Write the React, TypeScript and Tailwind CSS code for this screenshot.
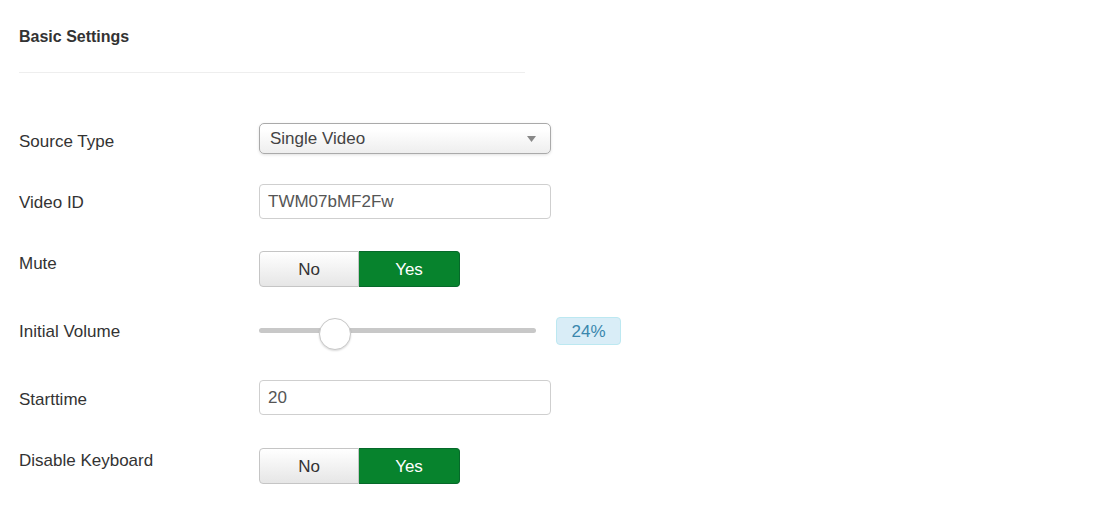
import React from 'react'

function Toggle({ value }: { value: boolean }) {
  return (
    <div className="flex h-[36px] w-[201px]">
      <div
        className={`flex w-[100px] items-center justify-center rounded-l-[4px] border border-[#c5c5c5] pt-[1px] ${
          value ? 'bg-gradient-to-b from-white to-[#e6e6e6] text-[#333]' : 'bg-[#07832d] text-white'
        }`}
      >
        No
      </div>
      <div
        className={`flex w-[101px] items-center justify-center rounded-r-[4px] border border-l-0 pt-[1px] ${
          value ? 'border-[#06692a] bg-[#07832d] text-white' : 'border-[#c5c5c5] bg-gradient-to-b from-white to-[#e6e6e6] text-[#333]'
        }`}
      >
        Yes
      </div>
    </div>
  )
}

function TextInput({ value }: { value: string }) {
  return (
    <div className="flex h-[35px] w-[292px] items-center rounded-[4px] border border-[#cfcfcf] bg-white px-[8px] pt-[1px] text-[#555]">
      {value}
    </div>
  )
}

export default function App() {
  const volume = 24
  return (
    <div className="min-h-[517px] bg-white px-[19px] pt-[27px] text-[17px] leading-[20px] text-[#333] font-['Liberation_Sans',Arial,sans-serif]">
      <h3 className="text-[16px] font-bold">Basic Settings</h3>
      <div className="mt-[25px] h-px w-[506px] bg-[#eeeeee]" />

      {/* Source Type */}
      <div className="mt-[50px] flex">
        <div className="w-[240px] pt-[9px]">Source Type</div>
        <div className="flex h-[31px] w-[292px] items-center justify-between rounded-[5px] border border-[#aaa] bg-gradient-to-b from-white from-20% to-[#eeeeee] pl-[10px] pr-[14px] pt-[1px] text-[#444] shadow-[0_1px_3px_rgba(0,0,0,0.12)]">
          <span>Single Video</span>
          <svg width="9" height="6" viewBox="0 0 9 6">
            <path d="M0 0 H9 L4.5 6 Z" fill="#888" />
          </svg>
        </div>
      </div>

      {/* Video ID */}
      <div className="mt-[30px] flex">
        <div className="w-[240px] pt-[9px]">Video ID</div>
        <TextInput value="TWM07bMF2Fw" />
      </div>

      {/* Mute */}
      <div className="mt-[32px] flex">
        <div className="w-[240px] pt-[3px]">Mute</div>
        <Toggle value={true} />
      </div>

      {/* Initial Volume */}
      <div className="mt-[30px] flex">
        <div className="w-[240px] pt-[5px]">Initial Volume</div>
        <div className="flex items-start gap-[20px]">
          <div className="relative h-[33px] w-[277px]">
            <div className="absolute left-0 right-0 top-[11px] h-[5px] rounded-full bg-[#c8c8c8]" />
            <div
              className="absolute top-[1px] h-[32px] w-[32px] -translate-x-1/2 rounded-full border border-[#c8c8c8] bg-white shadow-[0_1px_2px_rgba(0,0,0,0.15)]"
              style={{ left: `${(volume / 100) * 277 + 10}px` }}
            />
          </div>
          <div className="flex h-[28px] w-[65px] items-center justify-center rounded-[4px] border border-[#bce8f1] bg-[#d9edf7] pt-[1px] text-[17px] text-[#3a87ad]">
            {volume}%
          </div>
        </div>
      </div>

      {/* Starttime */}
      <div className="mt-[30px] flex">
        <div className="w-[240px] pt-[10px]">Starttime</div>
        <TextInput value="20" />
      </div>

      {/* Disable Keyboard */}
      <div className="mt-[33px] flex">
        <div className="w-[240px] pt-[3px]">Disable Keyboard</div>
        <Toggle value={true} />
      </div>
    </div>
  )
}
